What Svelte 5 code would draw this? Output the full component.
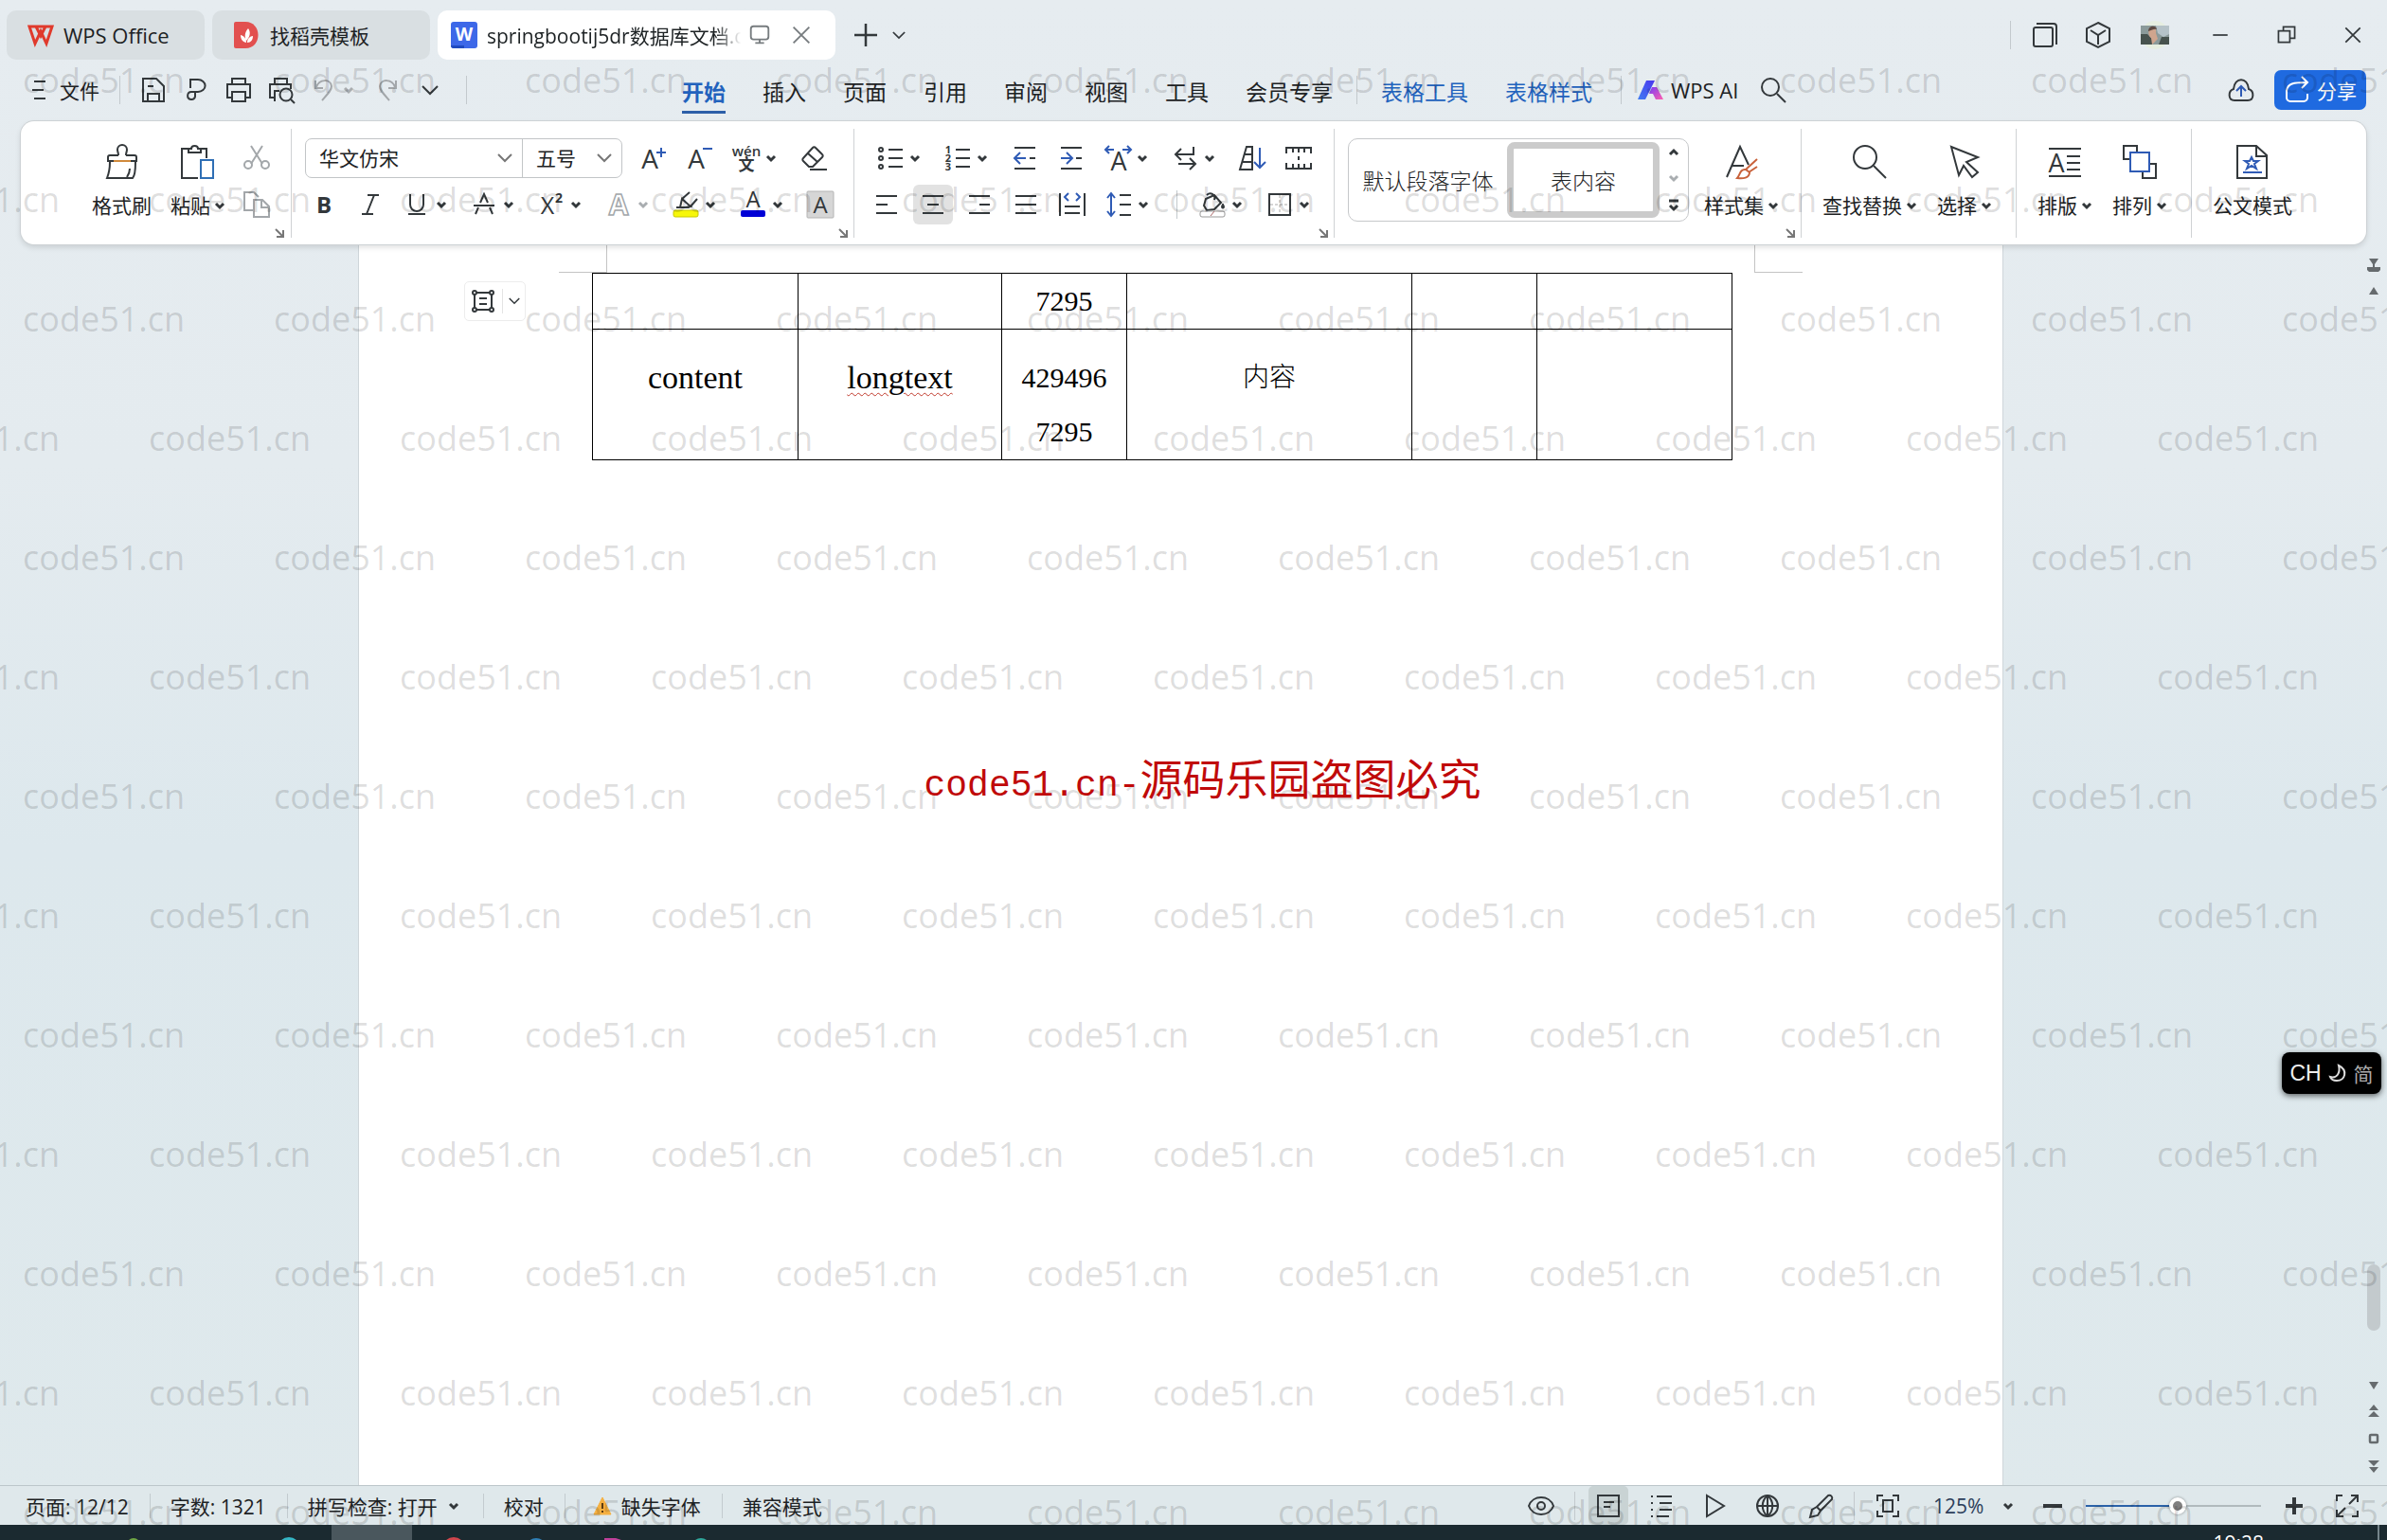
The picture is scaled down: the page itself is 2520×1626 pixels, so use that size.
<script lang="ts">
	type Tool = { icon: string; label: string; menu?: boolean; muted?: boolean; active?: boolean };

	const menus = ['开始', '插入', '页面', '引用', '审阅', '视图', '工具', '会员专享'];
	const tableMenus = ['表格工具', '表格样式'];
	let activeMenu = $state('开始');
	let zoom = $state(52.5);

	const quick: Tool[] = [
		{ icon: 'save', label: '保存' },
		{ icon: 'pdf', label: '输出为PDF' },
		{ icon: 'print', label: '打印' },
		{ icon: 'preview', label: '打印预览' },
		{ icon: 'undo', label: '撤销', menu: true, muted: true },
		{ icon: 'redo', label: '恢复', muted: true },
		{ icon: 'down', label: '自定义快速访问工具栏' }
	];

	const fontTop: Tool[] = [
		{ icon: 'grow', label: '增大字号' },
		{ icon: 'shrink', label: '减小字号' },
		{ icon: 'pinyin', label: '拼音指南', menu: true },
		{ icon: 'eraser', label: '清除格式' }
	];
	const fontBottom: Tool[] = [
		{ icon: 'bold', label: '加粗' },
		{ icon: 'italic', label: '倾斜' },
		{ icon: 'underline', label: '下划线', menu: true },
		{ icon: 'strike', label: '删除线', menu: true },
		{ icon: 'sup', label: '上标', menu: true },
		{ icon: 'effect', label: '文字效果', menu: true, muted: true },
		{ icon: 'highlight', label: '突出显示', menu: true },
		{ icon: 'color', label: '字体颜色', menu: true },
		{ icon: 'shade', label: '字符底纹' }
	];
	const paraTop: Tool[] = [
		{ icon: 'bullets', label: '项目符号', menu: true },
		{ icon: 'numbers', label: '编号', menu: true },
		{ icon: 'outdent', label: '减少缩进量' },
		{ icon: 'indent', label: '增加缩进量' },
		{ icon: 'scale', label: '中文版式', menu: true },
		{ icon: 'wrap', label: '换行', menu: true },
		{ icon: 'sort', label: '排序' },
		{ icon: 'marks', label: '显示/隐藏编辑标记' }
	];
	const paraBottom: Tool[] = [
		{ icon: 'left', label: '左对齐' },
		{ icon: 'center', label: '居中对齐', active: true },
		{ icon: 'right', label: '右对齐' },
		{ icon: 'justify', label: '两端对齐' },
		{ icon: 'spread', label: '分散对齐' },
		{ icon: 'spacing', label: '行距', menu: true }
	];
	const paraFill: Tool[] = [
		{ icon: 'fill', label: '底纹颜色', menu: true },
		{ icon: 'border', label: '边框', menu: true }
	];

	const views = ['page', 'outline', 'play', 'globe', 'pen'];

	const rows = [
		['', '', '7295', '', '', ''],
		['content', 'longtext', '429496 7295', '内容', '', '']
	];

	// odd rows of the watermark are shifted half a step to the left
	const marks = Array.from({ length: 13 }, (_, i) => i % 2 === 1);

	const blue = 'stroke="#2f5bb5"';
	const letter = (s: string, x: number, y: number, size: number, extra = '') =>
		`<text x="${x}" y="${y}" font-size="${size}" text-anchor="middle" stroke="none" fill="currentColor" ${extra}>${s}</text>`;

	const icons: Record<string, string> = {
		menu: '<path d="M8 5h12M6 14h12M8 23h12"/>',
		save: '<path d="M3 2h14l8 8v16H3zM8 26v-8h12v8M8 10h6"/>',
		pdf: '<path d="M8 12V3h8a7 6 0 0 1 0 13H9a4 4 0 1 0 4 5v-5"/>',
		print: '<path d="M7 8V2h14v6M7 22H2V8h24v14h-5M7 16h14v10H7z"/>',
		preview: '<path d="M7 8V2h13v6M7 22H2V8h22v5M7 26V15h5M24 24l4 4"/><circle cx="19" cy="19" r="6.500"/>',
		undo: '<path d="M5 4v8h8M6 11c3-9 15-9 16-1 0 4-3 7-10 15"/>',
		redo: '<path d="M23 4v8h-8M22 11c-3-9-15-9-16-1 0 4 3 7 10 15"/>',
		down: '<path d="M6 10l8 8 8-8"/>',
		grow: letter('A', 10, 25, 28) + `<path ${blue} d="M17 8h10M22 3v10"/>`,
		shrink: letter('A', 10, 25, 28) + `<path ${blue} d="M17 4h10"/>`,
		pinyin: letter('wén', 14, 12, 15, 'font-weight="600"') + letter('文', 14, 27, 17, 'font-weight="600"'),
		eraser: '<path d="M9 23l-6-6a2 2 0 0 1 0-3L13 3a2 2 0 0 1 3 0l7 7a2 2 0 0 1 0 3L13 23zM8 9l10 9M10 26h18"/>',
		bold: letter('B', 14, 23, 24, 'font-weight="700"'),
		italic: '<path d="M11 4h12M5 24h12M18 4l-8 20"/>',
		underline: '<path d="M7 3v11a7 7 0 0 0 14 0V3M5 24h18"/>',
		strike: '<path d="M3 15h22M10 12l4-9 4 9M8 17l-3 7M20 17l3 7"/>',
		sup: letter('X', 10, 24, 25) + letter('2', 22, 12, 14, 'font-weight="700"'),
		effect: '<text x="14" y="25" font-size="30" font-weight="700" text-anchor="middle" fill="#fff" stroke-width="1.500">A</text>',
		highlight: '<path d="M4 17h14M8 17l2-9 9 8-6 1M10 8l8-7M19 16l7-8"/><rect x="1" y="20" width="26" height="7" rx="2" fill="#f7f70a" stroke="#c9c900" stroke-width="1"/>',
		color: letter('A', 14, 17, 24) + '<rect x="1" y="20" width="26" height="7" rx="2" fill="#0000d6" stroke="none"/>',
		shade: '<rect x="0" y="0" width="28" height="28" rx="1" fill="#d6d6d6" stroke="#b4b4b4" stroke-width="1"/>' + letter('A', 14, 23, 24),
		bullets: '<path d="M12 5h15M12 14h15M12 23h15"/><circle cx="4" cy="5" r="2"/><circle cx="4" cy="14" r="2"/><circle cx="4" cy="23" r="2"/>',
		numbers: '<path d="M12 5h15M12 14h15M12 23h15"/>' + letter('1', 4, 9, 11, 'font-weight="700"') + letter('2', 4, 18, 11, 'font-weight="700"') + letter('3', 4, 27, 11, 'font-weight="700"'),
		outdent: `<path d="M3 3h22M19 14h6M3 25h22"/><path ${blue} d="M15 14H4M9 8l-6 6 6 6"/>`,
		indent: `<path d="M3 3h22M19 14h6M3 25h22"/><path ${blue} d="M3 14h11M9 8l6 6-6 6"/>`,
		scale: letter('A', 15, 27, 27) + `<path ${blue} d="M1 5h9M5 1L1 5l4 4M19 5h9M24 1l4 4-4 4"/>`,
		wrap: '<path d="M23 2v8H5M10 4l-6 6 6 6M7 20h18M19 14l6 6-6 6"/>',
		sort: `<path d="M1 26L8 2h6v24zM6 10h8M3 18h11"/><path ${blue} d="M22 3v21M16 18l6 6 6-6"/>`,
		marks: '<path d="M1 9V3h26v6M8 3v5M14 3v5M20 3v5M1 19v6h26v-6M8 25v-5M14 25v-5M20 25v-5M14 12v4"/>',
		left: '<path d="M3 5h22M3 14h12M3 23h22"/>',
		center: '<path d="M3 5h22M8 14h12M3 23h22"/>',
		right: '<path d="M3 5h22M14 14h11M3 23h22"/>',
		justify: '<path d="M3 5h22M3 14h22M3 23h22"/>',
		spread: `<path d="M1 2v24M27 2v24M6 16h16M6 23h16"/><path ${blue} d="M10 2L6 6l4 4M18 2l4 4-4 4"/>`,
		spacing: `<path d="M15 4h12M15 14h12M15 25h12"/><path ${blue} d="M6 3v22M2 7l4-5 4 5M2 21l4 5 4-5"/>`,
		fill: '<path d="M8 4c4-4 10 0 8 5M7 8l9-4 7 8-7 7-8 1-3-5z"/><path d="M25 13c2 3 2 5 0 5s-2-2 0-5z" fill="currentColor" stroke-width="1"/><rect x="1" y="21" width="26" height="6" rx="2" stroke="#999" stroke-width="1"/><path d="M12 26l4-5" stroke="#a66" stroke-width="1"/>',
		border: '<rect x="3" y="3" width="22" height="22"/><path d="M14 4v20M4 14h20" stroke="#aaa" stroke-width="1" stroke-dasharray="3 2"/>',
		cut: '<path d="M8 1l12 19M20 1L8 20"/><circle cx="5" cy="21" r="4"/><circle cx="23" cy="21" r="4"/>',
		copy: '<path d="M10 20H1V1h10l5 5M11 9h9l7 7v11H11zM19 9v8h8"/>',
		search: '<circle cx="11" cy="11" r="9"/><path d="M18 18l9 9"/>',
		cloud: `<path d="M7 25c-7 0-7-10-1-12C7 0 21 0 22 13c6 2 6 12-1 12z"/><path ${blue} d="M14 21V11M9 15l5-5 5 5"/>`,
		share: '<path d="M3 14v8a4 4 0 0 0 4 4h14a4 4 0 0 0 4-4v-4M3 15C4 7 10 6 25 6M19 0l6 6-6 6"/>',
		windows: '<rect x="2" y="6" width="20" height="20" rx="2"/><path d="M5 2h18a3 3 0 0 1 3 3v19"/>',
		cube: '<path d="M14 1l12 6v14l-12 6-12-6V7zM6 9l8 5 8-5M14 14v10"/>',
		min: '<path d="M5 14h18"/>',
		restore: '<path d="M4 9h14v14H4zM10 9V4h14v14h-6"/>',
		close: '<path d="M5 5l18 18M23 5L5 23"/>',
		monitor: '<rect x="4" y="4" width="20" height="15" rx="3"/><path d="M14 19v4M9 23h10"/>',
		plus: '<path d="M14 2v24M2 14h24" stroke-width="2.500"/>',
		eye: '<path d="M1 14C5 2 23 2 27 14 23 26 5 26 1 14z"/><circle cx="14" cy="14" r="4"/>',
		page: '<path d="M3 3h22v22H3zM9 10h11M9 15h7"/>',
		outline: '<path d="M9 4h16M12 11h13M12 18h13M9 25h13M3 4h2M3 11h2M3 18h2M3 25h2"/>',
		play: '<path d="M6 3l18 11L6 25z"/>',
		globe: '<circle cx="14" cy="14" r="11"/><path d="M3 14h22M14 3v22M14 3c-7 6-7 16 0 22M14 3c7 6 7 16 0 22"/>',
		pen: '<path d="M10 15L22 3a3 3 0 0 1 4 4L14 19zM10 15l-5 3-2 8 8-2 3-5"/>',
		fit: '<path d="M3 9V3h6M19 3h6v6M25 19v6h-6M9 25H3v-6M9 8h10v12H9z"/>',
		less: '<path d="M4 14h20" stroke-width="4"/>',
		more: '<path d="M5 14h18M14 5v18" stroke-width="4"/>',
		full: '<path d="M3 9V3h6M19 25h6v-6M16 12l9-9M18 3h7v7M12 16l-9 9M3 18v7h7"/>',
		frame: '<path d="M5 5h18v18H5zM10 11h8M10 17h8"/><g fill="#fff"><circle cx="5" cy="5" r="2"/><circle cx="23" cy="5" r="2"/><circle cx="5" cy="23" r="2"/><circle cx="23" cy="23" r="2"/></g>'
	};

	const bigIcons: Record<string, string> = {
		brush: '<path d="M14 11c0-3-1-4-1-6a5 5 0 0 1 10 0c0 2-1 3-1 6M14 11H5a2 2 0 0 0-2 2v4h30v-4a2 2 0 0 0-2-2h-9M5 18c0 7-1 12-3 17h27c2-2 3-9 3-17M23 34c2-3 3-5 3-9"/><path d="M9 17h18" stroke="#d08a3c"/>',
		paste: '<path d="M9 4H1v31h17M27 14V4h-7M8 8V4h3c0-4 7-4 7 0h3v4z"/><path d="M21 16h13v19H21z" stroke="#2f6fb5"/>',
		styles: '<path d="M3 34L17 2l9 19M9 22h12"/><path d="M35 15L23 26M35 23l-9 6M23 26c-6-1-6 6-9 9 6 1 13 0 13-6z" stroke="#c8613a" fill="#fff"/>',
		find: '<circle cx="13" cy="13" r="12"/><path d="M22 22l13 13"/>',
		pick: '<path d="M4 2l28 11-12 5 12 11-6 5-9-12-5 10z"/>',
		layout: '<path d="M1 4h34M1 33h34M20 12h14M20 19h14M20 26h14"/>' + letter('A', 9, 29, 27),
		arrange: '<path d="M7 15H1V1h14v7M21 29v6h14V20h-7"/><path d="M8 8h20v20H8z" stroke="#2f5bb5"/>',
		official: `<path d="M2 1h20l11 10v24H2zM22 1v11h11"/><path ${blue} d="M17 13l2 4 5 0-4 3 2 5-5-3-5 3 2-5-4-3 5 0zM8 29h20"/>`
	};
</script>

{#snippet icon(name: string)}
	<svg class="icon" width="28" height="28" viewBox="0 0 28 28" aria-hidden="true">{@html icons[name]}</svg>
{/snippet}

{#snippet chevron()}
	<svg class="chev" width="10" height="8" viewBox="0 0 10 8" aria-hidden="true"><path d="M1 2l4 4 4-4" /></svg>
{/snippet}

{#snippet thin()}
	<svg class="thin" width="16" height="10" viewBox="0 0 16 10" aria-hidden="true"><path d="M1 1l7 7 7-7" /></svg>
{/snippet}

{#snippet tool(t: Tool)}
	<button class="tool" class:menu={t.menu} class:muted={t.muted} class:active={t.active} aria-label={t.label}>
		{@render icon(t.icon)}
		{#if t.menu}{@render chevron()}{/if}
	</button>
{/snippet}

{#snippet big(name: string, label: string, menu: boolean)}
	<button class="big">
		<svg class="icon" width="36" height="36" viewBox="0 0 36 36" aria-hidden="true">{@html bigIcons[name]}</svg>
		<span class="caption">{label}{#if menu}{@render chevron()}{/if}</span>
	</button>
{/snippet}

{#snippet launcher()}
	<button class="launcher" aria-label="更多设置">
		<svg width="10" height="10" viewBox="0 0 10 10"><path d="M1 1l7 7M9 2v7H2" /></svg>
	</button>
{/snippet}

<div class="app">
	<header class="titlebar">
		<button class="doc home">
			<svg width="28" height="22" viewBox="0 0 28 22" aria-hidden="true">
				<path d="M2 2h24l-6 18-6-13-6 13zM9 2l5 10 5-10" fill="none" stroke="#e03a2c" stroke-width="3" />
			</svg>
			WPS Office
		</button>
		<button class="doc docer">
			<svg width="26" height="28" viewBox="0 0 26 28" aria-hidden="true">
				<path d="M2 0h10c18 0 18 28 0 28H2a2 2 0 0 1-2-2V2a2 2 0 0 1 2-2z" fill="#e2504f" />
				<path d="M13 22c-5-1-6-5-6-8 4 1 6 4 6 8zM13 20c-3-6 0-11 2-13 3 4 2 9-2 13zM14 22c0-4 3-7 6-7 0 4-2 7-6 7z" fill="#fff" />
			</svg>
			找稻壳模板
		</button>
		<div class="doc current">
			<svg width="28" height="28" viewBox="0 0 28 28" aria-hidden="true">
				<rect width="28" height="28" rx="3" fill="#3d68e8" />
				<path d="M0 25h14v3H3a3 3 0 0 1-3-3z" fill="#1f4ac0" />
				<text class="wmark" x="14" y="20" font-size="19" text-anchor="middle" fill="#fff">W</text>
			</svg>
			<span class="filename">springbootij5dr数据库文档.docx</span>
			<button class="mini" aria-label="在新窗口打开">{@render icon('monitor')}</button>
			<button class="mini" aria-label="关闭标签">{@render icon('close')}</button>
		</div>
		<button class="tool add" aria-label="新建">{@render icon('plus')}</button>
		<button class="tool" aria-label="标签列表">
			<svg class="thin dark" width="14" height="9" viewBox="0 0 16 10"><path d="M1 1l7 7 7-7" /></svg>
		</button>
		<div class="window">
			<span class="rule"></span>
			<button class="tool" aria-label="窗口">{@render icon('windows')}</button>
			<button class="tool" aria-label="应用">{@render icon('cube')}</button>
			<button class="tool avatar" aria-label="账号">
				<svg width="30" height="30" viewBox="0 0 30 30">
					<circle cx="15" cy="15" r="15" fill="#e6eee0" />
					<rect y="5" width="30" height="20" fill="#8b9a9a" />
					<path d="M16 5h14v9l-6 3-6-4z" fill="#b5c2c8" />
					<path d="M0 14h7l5 5v6H0zM22 17h8v8H19z" fill="#47524e" />
					<path d="M9 8c5-3 8 0 7 5l2 6-6 6-1-7c-3-2-3-6-2-10z" fill="#cfa58e" />
					<path d="M8 11c0-6 8-7 9-2-3-1-5 1-9 2z" fill="#5e4a42" />
				</svg>
			</button>
			<button class="sys" aria-label="最小化">{@render icon('min')}</button>
			<button class="sys" aria-label="还原">{@render icon('restore')}</button>
			<button class="sys" aria-label="关闭">{@render icon('close')}</button>
		</div>
	</header>

	<nav class="menubar">
		<button class="file">{@render icon('menu')}文件</button>
		<span class="rule"></span>
		<div class="quick">
			{#each quick as t}{@render tool(t)}{/each}
		</div>
		<span class="rule"></span>
		<div class="tabs">
			{#each menus as m}
				<button class="tab" class:on={activeMenu === m} onclick={() => (activeMenu = m)}>{m}</button>
			{/each}
		</div>
		<span class="rule"></span>
		<div class="tabs extra">
			{#each tableMenus as m}
				<button class="tab link" class:on={activeMenu === m} onclick={() => (activeMenu = m)}>{m}</button>
			{/each}
		</div>
		<span class="rule"></span>
		<button class="ai">
			<svg width="27" height="20" viewBox="0 0 27 20" aria-hidden="true">
				<defs>
					<linearGradient id="ai-left" x1="0" y1="1" x2="1" y2="0">
						<stop offset="0" stop-color="#3f7df2" />
						<stop offset="1" stop-color="#4a35ee" />
					</linearGradient>
					<linearGradient id="ai-right" x1="0" y1="0" x2="1" y2="1">
						<stop offset="0" stop-color="#7a3cf5" />
						<stop offset="1" stop-color="#ff5fae" />
					</linearGradient>
				</defs>
				<path d="M9 0h9L8 20H0z" fill="url(#ai-left)" />
				<path d="M15 7h5l7 13h-8l-3-6h-4z" fill="url(#ai-right)" />
			</svg>
			WPS AI
		</button>
		<button class="tool" aria-label="搜索">{@render icon('search')}</button>
		<button class="tool cloud" aria-label="云同步">{@render icon('cloud')}</button>
		<button class="share">{@render icon('share')}分享</button>
	</nav>

	<div class="ribbon">
		<section class="group clip">
			{@render big('brush', '格式刷', false)}
			{@render big('paste', '粘贴', true)}
			<div class="rows small">
				<div class="row">{@render tool({ icon: 'cut', label: '剪切', muted: true })}</div>
				<div class="row">{@render tool({ icon: 'copy', label: '复制', muted: true })}</div>
			</div>
			{@render launcher()}
		</section>

		<section class="group font">
			<div class="rows">
				<div class="row">
					<div class="combo">
						<label class="pick name">
							<select aria-label="字体"><option>华文仿宋</option></select>
							{@render thin()}
						</label>
						<label class="pick">
							<select aria-label="字号"><option>五号</option></select>
							{@render thin()}
						</label>
					</div>
					{#each fontTop as t}{@render tool(t)}{/each}
				</div>
				<div class="row lower">
					{#each fontBottom as t}{@render tool(t)}{/each}
				</div>
			</div>
			{@render launcher()}
		</section>

		<section class="group para">
			<div class="rows">
				<div class="row upper">
					{#each paraTop as t}{@render tool(t)}{/each}
				</div>
				<div class="row">
					{#each paraBottom as t}{@render tool(t)}{/each}
					<span class="rule"></span>
					{#each paraFill as t}{@render tool(t)}{/each}
				</div>
			</div>
			{@render launcher()}
		</section>

		<section class="group styles">
			<div class="gallery">
				<button class="style">默认段落字体</button>
				<button class="style chosen">表内容</button>
				<div class="steps">
					<button aria-label="上一行"><svg class="chev" width="10" height="8" viewBox="0 0 10 8"><path d="M1 6l4-4 4 4" /></svg></button>
					<button class="muted" aria-label="下一行">{@render chevron()}</button>
					<button aria-label="展开"><svg class="chev" width="10" height="12" viewBox="0 0 10 12"><path d="M0 1h10M1 6l4 4 4-4" /></svg></button>
				</div>
			</div>
			{@render big('styles', '样式集', true)}
			{@render launcher()}
		</section>

		<section class="group">
			{@render big('find', '查找替换', true)}
			{@render big('pick', '选择', true)}
		</section>
		<section class="group">
			{@render big('layout', '排版', true)}
			{@render big('arrange', '排列', true)}
		</section>
		<section class="group last">
			{@render big('official', '公文模式', false)}
		</section>
	</div>

	<main class="desk">
		<div class="stage">
			<article class="page">
				<div class="crops"><span class="crop start"></span><span class="crop end"></span></div>
				<div class="body">
					<button class="float" aria-label="段落布局">
						{@render icon('frame')}
						<span class="bar"></span>
						<svg class="thin dark" width="12" height="8" viewBox="0 0 16 10"><path d="M1 1l7 7 7-7" /></svg>
					</button>
					<table>
						<colgroup>
							<col class="w-name" /><col class="w-type" /><col class="w-size" />
							<col class="w-note" /><col class="w-size" /><col class="w-last" />
						</colgroup>
						<tbody>
							{#each rows as row}
								<tr>
									{#each row as cell, i}
										<td class:digits={i === 2} class:han={i === 3}>
											{#if cell === 'longtext'}<span class="typo">{cell}</span>{:else}{cell}{/if}
										</td>
									{/each}
								</tr>
							{/each}
						</tbody>
					</table>
				</div>
			</article>
		</div>
		<aside class="scroll">
			<svg width="14" height="14" viewBox="0 0 14 14"><path d="M2 0h10L8 6H6zM0 9h14v3l-2 2H2l-2-2zM6 6h2v3H6z" /></svg>
			<svg width="10" height="8" viewBox="0 0 10 8"><path d="M5 0l5 8H0z" /></svg>
			<span class="thumb"></span>
			<svg width="10" height="8" viewBox="0 0 10 8"><path d="M0 0h10L5 8z" /></svg>
			<svg width="12" height="14" viewBox="0 0 12 14"><path d="M6 0l5 6H1zM6 7l6 6H0z" /></svg>
			<svg width="12" height="12" viewBox="0 0 12 12"><rect x="2" y="2" width="8" height="8" rx="1" fill="none" stroke="#666b6e" stroke-width="2.500" /></svg>
			<svg width="12" height="14" viewBox="0 0 12 14"><path d="M6 14l5-6H1zM6 7l6-6H0z" /></svg>
		</aside>
	</main>

	<footer class="status">
		<span class="cell">页面: 12/12</span>
		<span class="cell">字数: 1321</span>
		<button class="cell spell">拼写检查: 打开{@render chevron()}</button>
		<button class="cell">校对</button>
		<button class="cell">
			<svg class="warn" width="20" height="20" viewBox="0 0 20 20" aria-hidden="true">
				<path d="M10 1l9 18H1z" fill="#f5b041" stroke="#f5b041" stroke-linejoin="round" />
				<path d="M10 7v6M10 15v2" stroke="#5a3a10" stroke-width="2" />
			</svg>
			缺失字体
		</button>
		<span class="cell final">兼容模式</span>
		<div class="views">
			<button class="view" aria-label="护眼模式">{@render icon('eye')}</button>
			<span class="rule"></span>
			{#each views as v, i}
				<button class="view" class:active={i === 0} aria-label={v}>{@render icon(v)}</button>
			{/each}
			<span class="rule"></span>
			<button class="view" aria-label="适合页面">{@render icon('fit')}</button>
			<label class="pick zoom">
				<select aria-label="显示比例"><option>125%</option></select>
				{@render chevron()}
			</label>
			<button class="view" aria-label="缩小">{@render icon('less')}</button>
			<input type="range" min="0" max="100" step="any" bind:value={zoom} aria-label="缩放" />
			<button class="view" aria-label="放大">{@render icon('more')}</button>
			<button class="view" aria-label="全屏">{@render icon('full')}</button>
		</div>
	</footer>

	<div class="taskbar">
		<svg width="760" height="16" viewBox="0 0 760 16" aria-hidden="true">
			<rect x="350" width="85" height="16" fill="#4a575d" />
			<circle cx="141" cy="21" r="7" fill="#6fa644" />
			<circle cx="305" cy="25" r="12" fill="#35b5c4" />
			<circle cx="479" cy="25" r="12" fill="#d0454c" />
			<circle cx="566" cy="25" r="11" fill="#2f7fb5" />
			<path d="M638 14h12l6 2h-18z" fill="#c0409a" />
			<circle cx="740" cy="24" r="10" fill="#2fa59a" />
		</svg>
		<span class="clock">19:28</span>
	</div>

	<div class="overlay" aria-hidden="true">
		{#each marks as shifted}
			<div class="line" class:shifted>
				{#each Array(11) as _}<span>code51.cn</span>{/each}
			</div>
		{/each}
	</div>
	<div class="notice"><p>code51.cn-<b>源码乐园盗图必究</b></p></div>

	<div class="ime">
		CH
		<svg width="20" height="20" viewBox="0 0 20 20" aria-hidden="true"><path d="M11 2c10 5 7 16-2 16-3 0-6-1-7-4 7 2 11-4 9-12z" /></svg>
		<small>简</small>
	</div>
</div>

<style>
	:global(body) {
		margin: 0;
	}
	.app {
		position: relative;
		display: flex;
		flex-direction: column;
		min-height: 100vh;
		overflow: hidden;
		font-family: 'Open Sans', 'Noto Sans CJK SC', sans-serif;
		font-size: 21px;
		color: #1d2224;
		background: linear-gradient(to bottom, #e6ecf0 0%, #e4ebef 30%, #dde8ed 55%, #dfe9ec 100%);
	}
	button {
		display: flex;
		align-items: center;
		flex: none;
		padding: 0;
		border: none;
		background: none;
		font: inherit;
		color: inherit;
		white-space: nowrap;
	}
	svg {
		display: block;
		flex: none;
		overflow: visible;
	}
	.icon {
		fill: none;
		stroke: currentColor;
		stroke-width: 2;
		color: #33383b;
	}
	.chev {
		fill: none;
		stroke: #33383b;
		stroke-width: 3;
	}
	.thin {
		fill: none;
		stroke: #777;
		stroke-width: 2;
	}
	.dark {
		stroke: #33383b;
	}
	.rule {
		flex: none;
		width: 1px;
		height: 30px;
		background: #c3c9cd;
	}

	.tool {
		justify-content: center;
		height: 42px;
		min-width: 28px;
	}
	.tool.menu {
		gap: 7px;
		padding-right: 5px;
	}
	.tool.active {
		margin: 0 -7px;
		padding: 0 7px;
		border-radius: 6px;
		background: #e2e2e2;
	}
	.tool.muted .icon {
		color: #a3a7aa;
	}
	.muted .chev {
		stroke: #a9adb0;
	}

	.titlebar {
		display: flex;
		align-items: center;
		height: 52px;
		padding: 11px 8px 7px 7px;
	}
	.doc {
		display: flex;
		align-items: center;
		height: 52px;
		margin-right: 8px;
		border-radius: 10px;
		background: #d9dfe2;
		box-sizing: border-box;
	}
	.home {
		gap: 10px;
		width: 209px;
		padding-left: 22px;
		font-size: 22px;
	}
	.docer {
		gap: 12px;
		width: 230px;
		padding-left: 23px;
	}
	.current {
		width: 420px;
		padding-left: 14px;
		background: #fff;
	}
	.wmark {
		font-family: 'Open Sans', sans-serif;
		font-weight: 700;
	}
	.filename {
		width: 274px;
		margin: 0 1px 0 10px;
		overflow: hidden;
		white-space: nowrap;
		mask-image: linear-gradient(to right, #000 88%, transparent 98%);
	}
	.mini {
		margin-right: 18px;
	}
	.mini .icon {
		width: 26px;
		color: #777c7f;
	}
	.add {
		margin: 0 7px 0 10px;
	}
	.window {
		display: flex;
		align-items: center;
		gap: 28px;
		margin-left: auto;
	}
	.window .rule {
		margin-right: -6px;
	}
	.avatar {
		margin-left: 3px;
	}
	.sys {
		width: 28px;
		margin-left: 14px;
	}
	.sys:last-child {
		margin-right: 12px;
	}
	.sys .icon {
		width: 24px;
	}

	.menubar {
		display: flex;
		align-items: center;
		height: 50px;
		margin-bottom: 8px;
		padding: 0 22px 0 28px;
	}
	.file {
		gap: 7px;
		margin-right: 21px;
	}
	.quick {
		display: flex;
		gap: 17px;
		margin: 0 24px 0 21px;
	}
	.tabs {
		display: flex;
		align-self: stretch;
		gap: 39px;
		margin: 0 25px 0 227px;
		font-size: 23px;
	}
	.extra {
		margin: 0 30px 0 25px;
	}
	.tab {
		padding-top: 4px;
		border-bottom: 3px solid transparent;
	}
	.on {
		border-color: #2c5fa8;
		color: #2262bd;
		font-weight: 700;
	}
	.link {
		color: #2262bd;
	}
	.ai {
		gap: 8px;
		margin: 0 23px 0 17px;
		font-size: 22px;
	}
	.cloud {
		margin-left: auto;
	}
	.share {
		gap: 7px;
		height: 42px;
		margin-left: 21px;
		padding: 0 10px;
		border-radius: 7px;
		background: #1f6ae0;
		color: #fff;
	}
	.share .icon {
		color: #fff;
	}

	.ribbon {
		display: flex;
		position: relative;
		z-index: 1;
		height: 130px;
		margin: 0 22px;
		border-radius: 14px;
		background: #fff;
		box-shadow: 0 0 0 1px #cdd2d5, 0 3px 6px #0002;
	}
	.group {
		display: flex;
		align-items: flex-start;
		gap: 22px;
		margin: 8px 0 7px;
		padding: 0 26px 0 22px;
		border-right: 1px solid #cfd2d4;
	}
	.clip {
		gap: 20px;
		padding: 0 7px 0 75px;
	}
	.font,
	.para,
	.styles {
		gap: 5px;
		padding: 0 6px 0 14px;
	}
	.styles {
		gap: 16px;
	}
	.styles .launcher {
		margin-left: -8px;
	}
	.para {
		padding-left: 20px;
	}
	.last {
		border: none;
	}
	.rows {
		display: flex;
		flex-direction: column;
		gap: 7px;
		padding-top: 10px;
	}
	.small {
		margin-right: -15px;
	}
	.row {
		display: flex;
		align-items: center;
		gap: 21px;
		height: 42px;
	}
	.row .rule {
		margin: 0 2px 0 4px;
	}
	.lower {
		padding-left: 6px;
	}
	.upper {
		padding-left: 4px;
	}
	.combo {
		display: flex;
		width: 335px;
		height: 42px;
		margin-right: -2px;
		border: 1px solid #c2c5c7;
		border-radius: 7px;
		box-sizing: border-box;
	}
	.pick {
		display: grid;
		flex: 1;
		align-items: center;
	}
	.pick select,
	.pick svg {
		grid-area: 1 / 1;
	}
	.pick select {
		height: 40px;
		padding: 0 0 0 14px;
		border: none;
		outline: none;
		appearance: none;
		background: none;
		font: inherit;
		color: inherit;
	}
	.pick svg {
		justify-self: end;
		margin-right: 10px;
		pointer-events: none;
	}
	.name {
		flex: 0 0 228px;
		border-right: 1px solid #c2c5c7;
	}
	.launcher {
		align-self: flex-end;
	}
	.launcher svg {
		fill: none;
		stroke: #777;
		stroke-width: 2;
	}
	.big {
		flex-direction: column;
		gap: 11px;
		padding-top: 17px;
	}
	.caption {
		display: flex;
		align-items: center;
		gap: 5px;
		line-height: 34px;
	}
	.gallery {
		display: flex;
		align-items: center;
		width: 360px;
		height: 88px;
		margin-top: 10px;
		border: 1px solid #c6c8ca;
		border-radius: 10px;
		box-sizing: border-box;
	}
	.style {
		flex: 1;
		justify-content: center;
		height: 80px;
		font-family: 'Noto Sans CJK SC', sans-serif;
		font-size: 23px;
		font-weight: 300;
	}
	.chosen {
		flex: 0 0 161px;
		border: 7px solid #cbcbcb;
		border-radius: 8px;
		box-sizing: border-box;
	}
	.steps {
		display: flex;
		flex-direction: column;
		align-items: center;
		gap: 19px;
		width: 30px;
	}

	.desk {
		display: flex;
		flex: 1;
	}
	.stage {
		display: flex;
		flex: 1;
		justify-content: center;
	}
	.page {
		flex: 0 1 1735px;
		background: #fff;
		box-shadow: 0 0 0 1px #cfd6da;
	}
	.crops {
		display: flex;
		justify-content: space-between;
		height: 30px;
		padding: 0 211px;
	}
	.crop {
		width: 50px;
		border-bottom: 1px solid #c4c4c4;
	}
	.start {
		border-right: 1px solid #c4c4c4;
	}
	.end {
		border-left: 1px solid #c4c4c4;
	}
	.body {
		display: flex;
		align-items: flex-start;
		padding-left: 111px;
	}
	.float {
		justify-content: space-between;
		width: 65px;
		height: 42px;
		margin: 9px 70px 0 0;
		padding: 0 5px;
		border: 1px solid #ececec;
		border-radius: 5px;
		box-sizing: border-box;
	}
	.bar {
		width: 1px;
		height: 26px;
		background: #e4e4e4;
	}
	table {
		width: 1204px;
		table-layout: fixed;
		border-collapse: collapse;
		font-family: 'Liberation Serif', 'Noto Sans CJK SC', serif;
		font-size: 34px;
		line-height: 57px;
		color: #000;
	}
	.w-name {
		width: 217px;
	}
	.w-type {
		width: 215px;
	}
	.w-size {
		width: 132px;
	}
	.w-note {
		width: 301px;
	}
	.w-last {
		width: 206px;
	}
	td {
		height: 58px;
		padding: 0;
		border: 1px solid #000;
		text-align: center;
		vertical-align: top;
	}
	tr:last-child td {
		height: 115px;
		padding-top: 22px;
	}
	.digits {
		padding-left: 15px;
		padding-right: 15px;
		font-size: 30px;
	}
	.han {
		font-size: 28px;
		font-weight: 300;
	}
	.typo {
		text-decoration: underline wavy #c0392b 1px;
		text-underline-offset: 4px;
	}
	.scroll {
		display: flex;
		flex-direction: column;
		align-items: center;
		gap: 16px;
		width: 14px;
		padding: 15px 7px 13px 6px;
		fill: #666b6e;
	}
	.thumb {
		width: 14px;
		height: 70px;
		margin: auto 0 38px;
		border-radius: 7px;
		background: #c3cacd;
	}

	.status {
		display: flex;
		align-items: center;
		height: 41px;
		padding: 0 21px 0 6px;
		border-top: 1px solid #bcc6ca;
		background: #dfe8eb;
	}
	.cell {
		display: flex;
		align-items: center;
		height: 26px;
		padding: 0 22px 0 21px;
		border-right: 1px solid #c3cbcf;
		white-space: nowrap;
	}
	.spell {
		gap: 12px;
		padding-right: 26px;
	}
	.final {
		border: none;
	}
	.warn {
		margin: 0 10px 0 8px;
	}
	.views {
		display: flex;
		align-items: center;
		gap: 14px;
		margin-left: auto;
	}
	.view {
		justify-content: center;
		width: 42px;
		height: 41px;
	}
	.view.active {
		border-radius: 5px;
		background: #c9d3d4;
	}
	.zoom {
		width: 84px;
		margin: 0 7px 0 13px;
		color: #2c3e5a;
	}
	.zoom select {
		padding: 0;
	}
	.zoom svg {
		margin-right: 0;
	}
	input[type='range'] {
		width: 185px;
		height: 18px;
		margin: 0;
		appearance: none;
		background: linear-gradient(to right, #2b62a8 52%, #b1babd 52%) center / 100% 2px no-repeat;
	}
	input[type='range']::-webkit-slider-thumb {
		width: 18px;
		height: 18px;
		border: 4px solid #fff;
		border-radius: 50%;
		box-sizing: border-box;
		appearance: none;
		background: #808080;
		box-shadow: 0 0 3px #0006;
	}
	.taskbar {
		display: flex;
		justify-content: space-between;
		height: 16px;
		overflow: hidden;
		background: #1b2a30;
		color: #fff;
	}
	.clock {
		margin-right: 8px;
		padding: 6px 120px 0 0;
		border-right: 2px solid #75858b;
		line-height: 26px;
	}

	.overlay,
	.notice {
		position: absolute;
		inset: 0;
		z-index: 2;
		overflow: hidden;
		pointer-events: none;
	}
	.overlay {
		padding: 22px 0 0 24px;
		color: rgba(0, 0, 0, 0.14);
		font-size: 36px;
		line-height: 126px;
	}
	.line {
		display: flex;
	}
	.shifted {
		margin-left: -132px;
	}
	.line span {
		flex: 0 0 265px;
	}
	.notice {
		display: flex;
		align-items: center;
		justify-content: center;
		padding: 14px 0 0 19px;
	}
	.notice p {
		margin: 0;
		color: #c00a0a;
		font: 38px 'Liberation Mono', monospace;
	}
	.notice b {
		font: 400 45px 'Noto Sans CJK SC', sans-serif;
	}
	.ime {
		position: absolute;
		right: 6px;
		top: 1111px;
		z-index: 3;
		display: flex;
		align-items: center;
		justify-content: center;
		gap: 7px;
		width: 105px;
		height: 44px;
		border-radius: 8px;
		background: #000;
		box-shadow: 0 2px 6px #0009;
		color: #eee;
		font-family: 'Liberation Sans', 'Noto Sans CJK SC', sans-serif;
		font-size: 23px;
	}
	.ime svg {
		fill: none;
		stroke: #ddd;
		stroke-width: 2;
	}
	.ime small {
		color: #aaa;
		font-size: 21px;
	}
</style>
